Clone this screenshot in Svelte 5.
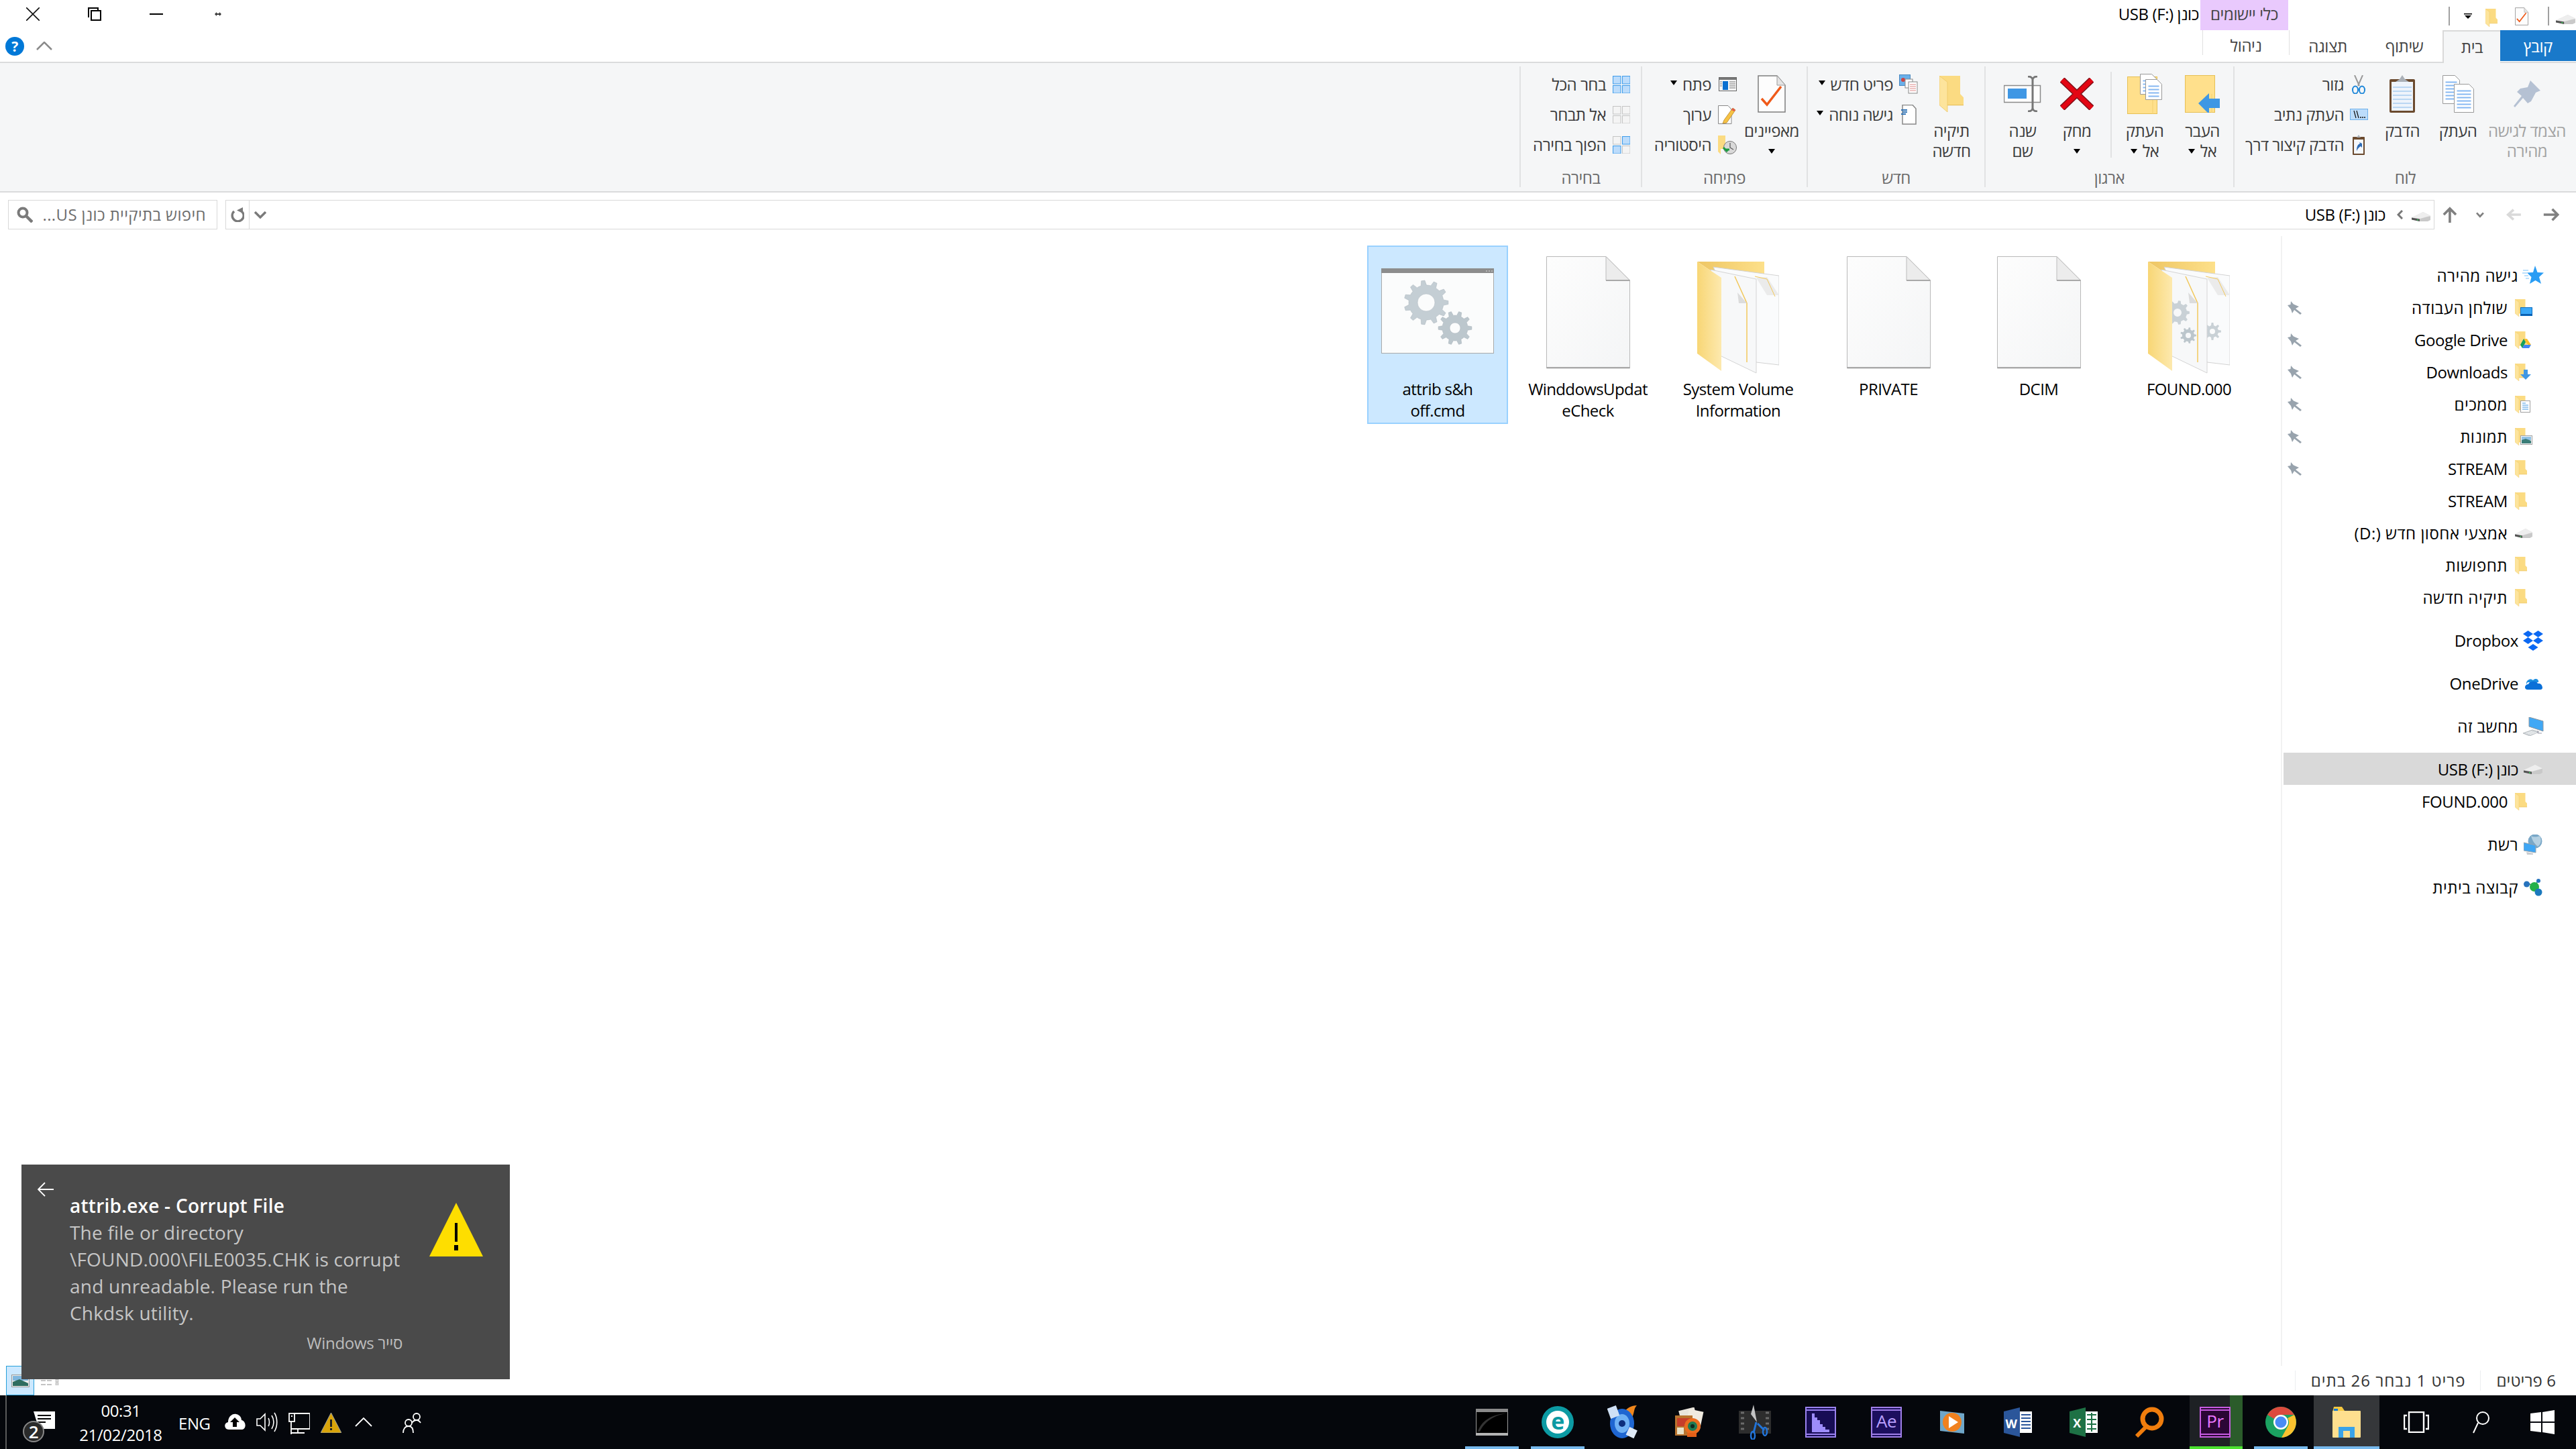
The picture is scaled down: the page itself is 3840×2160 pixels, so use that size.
<script>
  function gear(cx, cy, R, r, hole, n) {
    let d = '';
    const s = (Math.PI * 2) / n;
    for (let i = 0; i < n; i++) {
      const a = i * s;
      const pts = [[r, a - s * 0.5], [r, a - s * 0.28], [R, a - s * 0.14], [R, a + s * 0.14], [r, a + s * 0.28]];
      for (const [q, t] of pts) {
        d += (d ? 'L' : 'M') + (cx + q * Math.cos(t)).toFixed(1) + ' ' + (cy + q * Math.sin(t)).toFixed(1);
      }
    }
    d += 'Z';
    d += `M${cx - hole} ${cy}a${hole} ${hole} 0 1 0 ${hole * 2} 0a${hole} ${hole} 0 1 0 ${-hole * 2} 0Z`;
    return d;
  }

  const quick = [
    { t: 'שולחן העבודה', i: 'desk', pin: true },
    { t: 'Google Drive', i: 'gdrive', pin: true, lat: true },
    { t: 'Downloads', i: 'down', pin: true, lat: true },
    { t: 'מסמכים', i: 'docs', pin: true },
    { t: 'תמונות', i: 'pics', pin: true },
    { t: 'STREAM', i: 'plain', pin: true, lat: true },
    { t: 'STREAM', i: 'plain', lat: true },
    { t: 'אמצעי אחסון חדש (D:\u200E)', i: 'drive' },
    { t: 'תחפושות', i: 'plain' },
    { t: 'תיקיה חדשה', i: 'plain' }
  ];

  const files = [
    { l: ['FOUND.000'], k: 'open', gears: true },
    { l: ['DCIM'], k: 'doc' },
    { l: ['PRIVATE'], k: 'doc' },
    { l: ['System Volume', 'Information'], k: 'open' },
    { l: ['WinddowsUpdat', 'eCheck'], k: 'doc' },
    { l: ['attrib s&h', 'off.cmd'], k: 'cmd', sel: true }
  ];

  const apps = ['explorer', 'chrome', 'pr', 'mag', 'excel', 'word', 'play', 'ae', 'veg', 'sci', 'photo', 'disc', 'eset', 'cmd'];
</script>

{#snippet folder(w, h)}
  <svg width={w} height={h} viewBox="0 0 18 26" preserveAspectRatio="none">
    <path d="M0 0H15.500V13L18 15.500V21H5V21Z" fill="#fbdb82"/>
    <path d="M0 0L6 4.500V26L0 21Z" fill="#fde49c" stroke="#eec766" stroke-width=".4"/>
    <path d="M6 21H18" stroke="#e9c15c" stroke-width=".6"/>
  </svg>
{/snippet}

{#snippet drive(w = 28, h = 14)}
  <svg width={w} height={h} viewBox="0 0 28 14" preserveAspectRatio="none">
    <path d="M0 8.500L17 0L28 5.500L11 14L0 11Z" fill="#d8d8d8"/>
    <path d="M0 8L17 0L28 5.500L12 10Z" fill="#eeeeee"/>
    <path d="M0 8.500V11.500L12 14V10.500Z" fill="#545454"/>
    <path d="M12 10.500V14H24L28 12V6Z" fill="#c9c9c9"/>
    <rect x="8" y="11" width="2" height="1.500" fill="#38d05a"/>
  </svg>
{/snippet}

{#snippet propsDoc(w, h)}
  <svg width={w} height={h} viewBox="0 0 42 56">
    <path d="M1 1H29L41 15V55H1Z" fill="#fdfdfd" stroke="#7d7d7d" stroke-width="1.500"/>
    <path d="M29 1V15H41" fill="#e4e4e4" stroke="#9a9a9a"/>
    <path d="M6 35L14 44L35 17" fill="none" stroke="#ef5a1a" stroke-width="3.500"/>
  </svg>
{/snippet}

{#snippet lined(x, y, w, h)}
  <path d={`M${x} ${y}H${x + w - 7}L${x + w} ${y + 7}V${y + h}H${x}Z`} fill="#fff" stroke="#999" stroke-width="1"/>
  {#each Array.from({ length: Math.floor((h - 10) / 5) }) as _, i}
    <rect x={x + 4} y={y + 9 + i * 5} width={w - 8} height="2" fill="#86b8f2"/>
  {/each}
{/snippet}

{#snippet caret()}<i class="caret"></i>{/snippet}

{#snippet fourSquares(a, b, c, d)}
  <svg width="26" height="26" viewBox="0 0 26 26">
    {#each [[0, 0, a], [14, 0, b], [0, 14, c], [14, 14, d]] as [x, y, on]}
      <rect x={x + .500} y={y + .500} width="11.500" height="11.500" fill={on ? '#bcdcfb' : '#f4f4f4'} stroke={on ? '#3c9bea' : '#c4c4c4'}/>
    {/each}
  </svg>
{/snippet}

{#snippet treeIcon(k)}
  {#if k === 'star'}
    <svg width="32" height="32" viewBox="0 0 32 32">
      <path d="M19 1L22.500 11L32 11.500L25 18L28 28L19.500 23L11 28L13.500 18L7 11.500L16 11Z" fill="#2a9df4"/>
      <path d="M1 8H9M0 12H7M3 16H9M5 20H10" stroke="#a5d6fb" stroke-width="1.500"/>
    </svg>
  {:else if k === 'box'}
    <svg width="32" height="30" viewBox="0 0 32 30" fill="#0b68f2">
      <path d="M8.500 0L16 5L8.500 10L1 5ZM23.500 0L31 5L23.500 10L16 5ZM8.500 10L16 15L8.500 20L1 15ZM23.500 10L31 15L23.500 20L16 15ZM16 20L23.500 25L16 30L8.500 25Z"/>
    </svg>
  {:else if k === 'cloud'}
    <svg width="29" height="18" viewBox="0 0 29 18">
      <path d="M4 10C3 4 10 0 14 4C18 0 23 3 22 7H6Z" fill="#1c8ee0"/>
      <path d="M6 18C0 18 1 10 7 10C9 4 20 5 21 9C27 7 31 18 25 18Z" fill="#0a70d8"/>
    </svg>
  {:else if k === 'pc'}
    <svg width="31" height="28" viewBox="0 0 31 28">
      <path d="M9 0L30 6V21L9 14Z" fill="#40a8f5" stroke="#8a96a0"/>
      <path d="M0 24L14 19L24 22L10 28Z" fill="#cfd4d8" stroke="#a4a9ae" stroke-width=".700"/>
      <path d="M4 24L14 21M7 25L17 22M10 26L20 23" stroke="#f2f4f5"/>
      <path d="M22 20V24H28" stroke="#99a" fill="none"/>
    </svg>
  {:else if k === 'usb'}
    {@render drive()}
  {:else if k === 'net'}
    <svg width="28" height="30" viewBox="0 0 28 30">
      <circle cx="17" cy="10" r="10.500" fill="#79a7c7"/>
      <path d="M11 2C15 5 22 3 24 2C27 8 26 14 21 18C17 14 14 12 11 2Z" fill="#b4d0e2"/>
      <path d="M0 12L18 16V27L0 24Z" fill="#3fa6f4" stroke="#9aa4ab"/>
      <path d="M4 26L14 28V30H5Z" fill="#c8ccd0"/>
    </svg>
  {:else if k === 'home'}
    <svg width="28" height="26" viewBox="0 0 28 26">
      <path d="M6 6L17 13M21 2L17 13M17 13L22 20" stroke="#4b8a7c" stroke-width="1.500"/>
      <circle cx="4.500" cy="8" r="4.500" fill="#2773bd"/>
      <circle cx="22" cy="3" r="3" fill="#2773bd"/>
      <circle cx="16" cy="12" r="7" fill="#24b04a"/>
      <circle cx="22" cy="20" r="5.500" fill="#1b79bd"/>
    </svg>
  {:else if k === 'drive'}
    {@render drive(28, 14)}
  {:else}
    <span class="fwrap">
      {@render folder(18, 26)}
      {#if k === 'desk'}
        <svg class="ov" width="18" height="13" viewBox="0 0 18 13"><rect x=".5" y=".5" width="17" height="12" fill="#39a8f8" stroke="#0a6cc0"/><path d="M0 11H18" stroke="#0a5fb0" stroke-width="2"/></svg>
      {:else if k === 'gdrive'}
        <svg class="ov" width="16" height="14" viewBox="0 0 16 14"><path d="M5 0H10L16 9H11Z" fill="#fbc02d"/><path d="M5 0L8 5L3 14L0 9Z" fill="#16a05d"/><path d="M3 14L5.500 9H16L13 14Z" fill="#4285f4"/></svg>
      {:else if k === 'down'}
        <svg class="ov" width="16" height="16" viewBox="0 0 16 16"><path d="M5 0H11V7H16L8 15L0 7H5Z" fill="#3f97e4"/></svg>
      {:else if k === 'docs'}
        <svg class="ov" width="15" height="18" viewBox="0 0 15 18"><rect x=".5" y=".5" width="14" height="17" fill="#fff" stroke="#a0a0a0"/><path d="M3 4H8M3 7H12M3 10H12M3 13H12" stroke="#3f97e4"/></svg>
      {:else if k === 'pics'}
        <svg class="ov" width="18" height="14" viewBox="0 0 18 14"><rect x=".5" y=".5" width="17" height="13" fill="#f8f8f8" stroke="#a0a0a0"/><rect x="2" y="2" width="14" height="5" fill="#8fc1e6"/><path d="M2 7L8 5L16 8V12H2Z" fill="#3a7d78"/></svg>
      {/if}
    </span>
  {/if}
{/snippet}

{#snippet pinSmall()}
  <svg class="pin" width="21" height="20" viewBox="0 0 21 20">
    <path d="M5 0L9 4.500L17 8L12 11L21 18L19 20L10 13L7 18L5 12L0 6L4.500 5Z" fill="#98a3ad"/>
  </svg>
{/snippet}

{#snippet openFolder(gears)}
  <svg width="122" height="167" viewBox="0 0 122 167">
    <defs>
      <linearGradient id="ofb" x1="0" x2="1"><stop offset="0" stop-color="#eec664"/><stop offset="1" stop-color="#fde08a"/></linearGradient>
      <linearGradient id="off" x1="0" x2="1"><stop offset="0" stop-color="#f8d675"/><stop offset="1" stop-color="#fde9ae"/></linearGradient>
    </defs>
    <path d="M0 0H100V32L36 24Z" fill="url(#ofb)"/>
    <path d="M24 8L122 21V154L88 150Z" fill="#fafbfc" stroke="#d2d2d2"/>
    <path d="M88 24L104 50H122L104 23Z" fill="#ebebeb"/>
    <path d="M86 22L104 26L116 52" fill="none" stroke="#f2c85c" stroke-width="1"/>
    {#if gears}
      <path d={gear(96, 104, 13, 9, 4, 8)} fill="#c9d1d6" fill-rule="evenodd"/>
    {/if}
    <path d="M20 12L88 26V166L34 140Z" fill="#f7f8f9" stroke="#d4d4d4"/>
    <path d="M56 22L74 62V150" fill="none" stroke="#f2c85c" stroke-width="1.500"/>
    <path d="M60 46L74 62L62 62Z" fill="#dcdcdc"/>
    {#if gears}
      <path d={gear(44, 76, 18, 14, 6, 9)} fill="#c9d1d6" fill-rule="evenodd"/>
      <path d={gear(60, 110, 12, 9, 4, 9)} fill="#bcc6cc" fill-rule="evenodd"/>
    {/if}
    <path d="M0 0L36 24V163L0 137Z" fill="url(#off)"/>
  </svg>
{/snippet}

{#snippet appIcon(a)}
  {#if a === 'cmd'}
    <svg width="48" height="40" viewBox="0 0 48 40">
      <rect x=".5" y=".5" width="47" height="39" fill="#000" stroke="#9a9a9a"/><rect width="48" height="5" fill="#8a8a8a"/><rect y="36" width="48" height="4" fill="#b4b4b4"/>
      <path d="M3 34C8 18 24 8 46 7V7C28 9 12 20 6 34Z" fill="#333"/>
    </svg>
  {:else if a === 'eset'}
    <svg width="48" height="48" viewBox="0 0 48 48">
      <circle cx="24" cy="24" r="24" fill="#0c9aa3"/><circle cx="24" cy="24" r="17" fill="#fff"/>
      <text x="24" y="35" text-anchor="middle" class="eset">e</text>
    </svg>
  {:else if a === 'disc'}
    <svg width="48" height="50" viewBox="0 0 48 50">
      <path d="M24 12C28 4 36 0 44 0C38 6 42 12 34 22Z" fill="#f0861c"/>
      <ellipse cx="22" cy="27" rx="18" ry="22" fill="#1f66d1"/>
      <ellipse cx="22" cy="27" rx="11" ry="14" fill="#6fb1f4"/>
      <circle cx="22" cy="27" r="5" fill="#0c2f7c"/>
      <rect x="2" y="2" width="14" height="16" fill="#cfe0f5" transform="rotate(-20 9 10)"/>
      <rect x="30" y="34" width="13" height="13" fill="#dfe9f6" transform="rotate(25 36 40)"/>
    </svg>
  {:else if a === 'photo'}
    <svg width="46" height="44" viewBox="0 0 46 44">
      <rect x="10" y="2" width="24" height="26" fill="#e8e4dc" transform="rotate(-14 22 15)"/>
      <rect x="20" y="4" width="22" height="26" fill="#f0ebe0" transform="rotate(12 30 17)"/>
      <rect x="2" y="12" width="26" height="30" fill="#b8732e"/>
      <rect x="5" y="16" width="20" height="12" fill="#c63d2b"/>
      <rect x="5" y="30" width="10" height="10" fill="#e9e2c8"/>
      <circle cx="28" cy="28" r="12" fill="#ea6d1f"/><circle cx="28" cy="28" r="7" fill="#1f7a52"/><circle cx="28" cy="28" r="3" fill="#0c2a1e"/>
      <rect x="20" y="38" width="14" height="6" fill="#e35f18"/>
    </svg>
  {:else if a === 'sci'}
    <svg width="48" height="52" viewBox="0 0 48 52">
      <rect x="0" y="9" width="48" height="34" fill="#2d2d2d"/>
      <path d="M3 12H8M3 20H8M3 28H8M3 36H8M40 12H45M40 20H45M40 28H45M40 36H45" stroke="#6b6b6b" stroke-width="3"/>
      <path d="M22 0L27 26L18 14Z" fill="#c4c4c4"/>
      <path d="M26 26L22 42M28 28L38 38" stroke="#2274d8" stroke-width="3"/>
      <ellipse cx="21" cy="46" rx="3" ry="6" fill="none" stroke="#2274d8" stroke-width="2.500"/>
      <ellipse cx="39" cy="40" rx="3" ry="6" fill="none" stroke="#2274d8" stroke-width="2.500"/>
    </svg>
  {:else if a === 'veg'}
    <svg width="46" height="46" viewBox="0 0 46 46">
      <rect x="1" y="1" width="44" height="44" fill="#170d55" stroke="#9a82ee" stroke-width="2"/>
      <rect x="1" y="4" width="44" height="2" fill="#9a82ee"/><rect x="1" y="40" width="44" height="2" fill="#9a82ee"/>
      <path d="M10 10H14V16H18V20H22V26H26V30H30V34H36V38H10Z" fill="#9d8cfb"/>
    </svg>
  {:else if a === 'ae'}
    <svg width="46" height="46" viewBox="0 0 46 46">
      <rect x="1" y="1" width="44" height="44" fill="#1c0f5e" stroke="#a07fe8" stroke-width="2"/>
      <rect x="1" y="4" width="44" height="2" fill="#a07fe8"/><rect x="1" y="40" width="44" height="2" fill="#a07fe8"/>
      <text x="23" y="31" text-anchor="middle" class="ae">Ae</text>
    </svg>
  {:else if a === 'pr'}
    <svg width="46" height="46" viewBox="0 0 46 46">
      <rect x="1" y="1" width="44" height="44" fill="#2b0635" stroke="#c75be0" stroke-width="2"/>
      <rect x="1" y="4" width="44" height="2" fill="#c75be0"/><rect x="1" y="40" width="44" height="2" fill="#c75be0"/>
      <text x="23" y="31" text-anchor="middle" class="pr">Pr</text>
    </svg>
  {:else if a === 'play'}
    <svg width="36" height="36" viewBox="0 0 36 36">
      <path d="M0 1L36 5V35L0 31Z" fill="#6fa6c8"/>
      <circle cx="18" cy="18" r="14" fill="#f0811f"/>
      <path d="M13 9L27 18L13 27Z" fill="#fff"/>
    </svg>
  {:else if a === 'word'}
    <svg width="42" height="44" viewBox="0 0 42 44">
      <path d="M24 0V44L0 38V6Z" fill="#2b569a"/>
      <path d="M24 6H42V38H24Z" fill="#fff"/>
      <path d="M26 11H40M26 16H40M26 21H40M26 26H40M26 31H40" stroke="#2b569a" stroke-width="2"/>
      <text x="11" y="31" text-anchor="middle" class="wx">W</text>
    </svg>
  {:else if a === 'excel'}
    <svg width="42" height="44" viewBox="0 0 42 44">
      <path d="M24 0V44L0 38V6Z" fill="#1e7145"/>
      <path d="M24 6H42V38H24Z" fill="#fff"/>
      <path d="M26 11H40M26 18H40M26 25H40M26 32H40M33 8V36" stroke="#1e7145" stroke-width="2"/>
      <text x="11" y="30" text-anchor="middle" class="wx">X</text>
    </svg>
  {:else if a === 'mag'}
    <svg width="44" height="46" viewBox="0 0 44 46">
      <circle cx="26" cy="18" r="14" fill="none" stroke="#f07d0d" stroke-width="7"/>
      <path d="M17 30L3 44" stroke="#f07d0d" stroke-width="6"/>
    </svg>
  {:else if a === 'chrome'}
    <svg width="46" height="46" viewBox="0 0 46 46">
      <circle cx="23" cy="23" r="23" fill="#1ba261"/>
      <path d="M23 0A23 23 0 0 1 43 12H23A11 11 0 0 0 13 18L3 12A23 23 0 0 1 23 0Z" fill="#dc4a3d"/>
      <path d="M43 12A23 23 0 0 1 24 46L34 28A11 11 0 0 0 33 17Z" fill="#fbc22f"/>
      <circle cx="23" cy="23" r="11" fill="#fff"/><circle cx="23" cy="23" r="8.500" fill="#4a8bf5"/>
    </svg>
  {:else if a === 'explorer'}
    <svg width="42" height="46" viewBox="0 0 42 46">
      <path d="M0 8L2 0H14L18 6H34V12H0Z" fill="#f5c73f"/>
      <rect x="2" y="3" width="6" height="5" fill="#0c78d4"/>
      <rect y="6" width="42" height="40" rx="1" fill="#fedf8e"/>
      <path d="M9 30H33V46H26V36H16V46H9Z" fill="#3aa3e8"/>
    </svg>
  {/if}
{/snippet}

<div class="win" dir="rtl">
  <header class="title">
    <span class="qdrive">{@render drive(29, 14)}</span>
    <i class="qsep"></i>
    <span class="qcheck">{@render propsDoc(20, 27)}</span>
    <span class="qfold">{@render folder(18, 27)}</span>
    <svg class="qarrow" width="12" height="8" viewBox="0 0 12 8"><rect width="12" height="1.500"/><path d="M1 3H11L6 8Z"/></svg>
    <i class="qsep qsep2"></i>
    <span class="ctx">כלי יישומים</span>
    <span class="wtitle">כונן USB (F:)</span>
    <div class="wctl">
      <span><svg width="20" height="20" viewBox="0 0 20 20"><path d="M0 0L20 20M20 0L0 20" stroke="#111" stroke-width="1.600"/></svg></span>
      <span><svg width="20" height="20" viewBox="0 0 20 20" fill="none" stroke="#000" stroke-width="2"><path d="M1 15V1H15"/><path d="M1 1H15V4" /><rect x="5" y="5" width="14" height="14"/></svg></span>
      <span><svg width="20" height="2" viewBox="0 0 20 2"><rect width="20" height="2"/></svg></span>
      <span><svg width="10" height="8" viewBox="0 0 10 8" fill="#333"><path d="M0 4L3 1V3H7V1L10 4L7 7V5H3V7Z"/></svg></span>
    </div>
  </header>

  <nav class="tabs">
    <span class="tab file">קובץ</span>
    <span class="tab home">בית</span>
    <span class="tab share">שיתוף</span>
    <span class="tab view">תצוגה</span>
    <span class="tab manage">ניהול</span>
    <div class="helpers">
      <span class="help">?</span>
      <svg width="24" height="13" viewBox="0 0 24 13"><path d="M1 12L12 1L23 12" fill="none" stroke="#8a8a8a" stroke-width="2.500"/></svg>
    </div>
  </nav>

  <section class="ribbon">
    <div class="group g-clip">
      <div class="grow">
        <div class="big w-pin dim">
          <div class="bi"><svg width="40" height="40" viewBox="0 0 40 40"><path d="M25 0L40 15L33 18L26 31L21 34L14 26L2 40L0 38L12 23L5 17L10 12L21 10Z" fill="#b5c1d3"/></svg></div>
          <span>הצמד לגישה</span><span>מהירה</span>
        </div>
        <div class="big w-copy">
          <div class="bi"><svg width="47" height="56" viewBox="0 0 47 56">{@render lined(0.500, 0.500, 25, 42)}{@render lined(17.500, 13.500, 29, 42)}</svg></div>
          <span>העתק</span>
        </div>
        <div class="big w-paste">
          <div class="bi"><svg width="40" height="57" viewBox="0 0 40 57">
            <rect x="1" y="6" width="38" height="50" rx="2" fill="#6b4a2e"/>
            <rect x="4" y="10" width="32" height="43" fill="#eef4fb"/>
            <path d="M6 18H34M6 24H34M6 30H34M6 36H34M6 42H34M6 48H34" stroke="#a9cdf1" stroke-width="1.500"/>
            <path d="M20 0L24 6L30 10H10L16 6Z" fill="#aab0b7"/>
          </svg></div>
          <span>הדבק</span>
        </div>
        <div class="col cut">
          <div class="sm"><span class="si"><svg width="20" height="28" viewBox="0 0 20 28"><path d="M4 0L11 16M16 0L9 16" stroke="#9a9a9a" stroke-width="2"/><ellipse cx="5" cy="22" rx="4" ry="5.500" fill="none" stroke="#1c86d8" stroke-width="2"/><ellipse cx="15" cy="22" rx="4" ry="5.500" fill="none" stroke="#1c86d8" stroke-width="2"/></svg></span><span>גזור</span></div>
          <div class="sm"><span class="si"><svg width="27" height="17" viewBox="0 0 27 17"><rect x=".5" y=".5" width="26" height="16" fill="#bcdcfb" stroke="#6eb0ea"/><path d="M6 3L9 14M10 3L13 14" stroke="#111" stroke-width="1.200"/><path d="M15 13H23" stroke="#111" stroke-width="1.500" stroke-dasharray="2 1"/></svg></span><span>העתק נתיב</span></div>
          <div class="sm"><span class="si"><svg width="20" height="30" viewBox="0 0 20 30"><rect x="1" y="3" width="18" height="27" rx="1" fill="#6b4a2e"/><rect x="3" y="7" width="14" height="21" fill="#f4f7fb"/><path d="M10 0L13 4H7Z" fill="#aab0b7"/><path d="M7 24C7 17 9 14 12 13L11 11L15 13V19L13 17C11 18 9 20 7 24Z" fill="#2f6cb5"/></svg></span><span>הדבק קיצור דרך</span></div>
        </div>
      </div>
      <div class="glabel lclip">לוח</div>
    </div>

    <div class="group g-org">
      <div class="grow">
        <div class="big w-move">
          <div class="bi"><svg width="52" height="56" viewBox="0 0 52 56">
            <rect x=".5" y=".5" width="44" height="55" fill="#ffe08c" stroke="#e6c056"/>
            <path d="M40 28V56" stroke="#f3cf71" stroke-width="1"/>
            <path d="M20 42L36 27V35H52V49H36V58Z" fill="#3f97e4"/>
          </svg></div>
          <span>העבר</span><span class="tail">{@render caret()}אל</span>
        </div>
        <div class="big w-copyto">
          <div class="bi"><svg width="52" height="60" viewBox="0 0 52 60">
            <rect x=".5" y="4.500" width="44" height="55" fill="#ffe08c" stroke="#e6c056"/>
            <path d="M38 36V60" stroke="#f3cf71"/>
            {@render lined(19.500, 0.500, 24, 30)}{@render lined(27.500, 8.500, 24, 30)}
          </svg></div>
          <span>העתק</span><span class="tail">{@render caret()}אל</span>
        </div>
        <i class="isep"></i>
        <div class="big w-del">
          <div class="bi"><svg width="50" height="48" viewBox="0 0 50 48"><path d="M3 3L25 24M47 3L25 24M3 45L25 24M47 45L25 24" stroke="#80131b" stroke-width="10"/><path d="M3 3L47 45M47 3L3 45" stroke="#e30613" stroke-width="7"/></svg></div>
          <span>מחק</span><span class="tail">{@render caret()}</span>
        </div>
        <div class="big w-ren">
          <div class="bi"><svg width="57" height="54" viewBox="0 0 57 54">
            <rect x=".5" y="14.500" width="54" height="25" fill="#fdfdfd" stroke="#8a8a8a" stroke-width="1.500"/>
            <rect x="6" y="19" width="28" height="15" fill="#3f97e4"/>
            <path d="M36 1C40 1 43 3 43 6V48C43 51 40 53 36 53M50 1C46 1 43 3 43 6M43 48C43 51 46 53 50 53" fill="none" stroke="#777" stroke-width="3"/>
          </svg></div>
          <span>שנה</span><span>שם</span>
        </div>
      </div>
      <div class="glabel">ארגון</div>
    </div>

    <div class="group g-new">
      <div class="grow">
        <div class="big w-nf">
          <div class="bi">{@render folder(36, 54)}</div>
          <span>תיקיה</span><span>חדשה</span>
        </div>
        <div class="col newc">
          <div class="sm"><span class="si"><svg width="28" height="29" viewBox="0 0 28 29"><rect x=".5" y=".5" width="16" height="16" fill="#6ab0ea" stroke="#4a88c0"/><circle cx="6" cy="8" r="3" fill="#c44"/><rect x="9" y="7" width="11" height="13" fill="#fff" stroke="#888"/><rect x="14" y="11" width="13" height="17" fill="#fff" stroke="#888"/><path d="M16 15H25M16 18H25M16 21H25M16 24H25" stroke="#d88"/></svg></span><span>פריט חדש</span>{@render caret()}</div>
          <div class="sm"><span class="si"><svg width="24" height="30" viewBox="0 0 24 30"><path d="M3 .5H18L23 6V29H3Z" fill="#fff" stroke="#888" stroke-width="1.500"/><path d="M1 8H10M3 11H10M1 14H8" stroke="#2f73b5" stroke-width="2"/></svg></span><span>גישה נוחה</span>{@render caret()}</div>
        </div>
      </div>
      <div class="glabel">חדש</div>
    </div>

    <div class="group g-open">
      <div class="grow">
        <div class="big w-prop">
          <div class="bi">{@render propsDoc(42, 56)}</div>
          <span>מאפיינים</span><span class="tail">{@render caret()}</span>
        </div>
        <div class="col openc">
          <div class="sm"><span class="si"><svg width="27" height="21" viewBox="0 0 27 21"><rect x=".5" y=".5" width="26" height="20" fill="#f5f5f5" stroke="#666"/><rect x="1" y="1" width="25" height="3" fill="#777"/><rect x="6" y="6" width="8" height="13" fill="#0a6fd0"/><path d="M16 7H25M16 10H25M16 13H25M16 16H25M2 7H5M2 10H5M2 13H5" stroke="#777"/></svg></span><span>פתח</span>{@render caret()}</div>
          <div class="sm"><span class="si"><svg width="28" height="28" viewBox="0 0 28 28"><path d="M.5 .5H15L20 6V27.500H.5Z" fill="#fff" stroke="#888"/><path d="M22 4L26 7L13 26L7 27L9 22Z" fill="#f6c244" stroke="#b8862a" stroke-width=".800"/><path d="M22 4L26 7L24 9L20 7Z" fill="#e25b4a"/></svg></span><span>ערוך</span></div>
          <div class="sm"><span class="si"><svg width="28" height="28" viewBox="0 0 28 28"><path d="M0 0H11V20H4V28L0 24Z" fill="#fbdb82"/><circle cx="18" cy="18" r="9.500" fill="#d9d9d9" stroke="#777"/><path d="M18 11V18L23 21" stroke="#555" fill="none" stroke-width="1.200"/><path d="M8 18L14 24M10 21H17" stroke="#1c9a40" stroke-width="3"/></svg></span><span>היסטוריה</span></div>
        </div>
      </div>
      <div class="glabel">פתיחה</div>
    </div>

    <div class="group g-sel">
      <div class="grow">
        <div class="col selc">
          <div class="sm"><span class="si">{@render fourSquares(true, true, true, true)}</span><span>בחר הכל</span></div>
          <div class="sm"><span class="si">{@render fourSquares(false, false, false, false)}</span><span>אל תבחר</span></div>
          <div class="sm"><span class="si">{@render fourSquares(false, true, true, false)}</span><span>הפוך בחירה</span></div>
        </div>
      </div>
      <div class="glabel">בחירה</div>
    </div>
  </section>

  <div class="addr">
    <div class="navs">
      <svg width="28" height="24" viewBox="0 0 28 24" fill="none" stroke="#808080" stroke-width="4"><path d="M2 12H25M16 3L25 12L16 21"/></svg>
      <svg width="24" height="20" viewBox="0 0 24 20" fill="none" stroke="#d9d9d9" stroke-width="4"><path d="M24 10H3M12 2L3 10L12 18"/></svg>
      <svg width="13" height="9" viewBox="0 0 13 9" fill="none" stroke="#808080" stroke-width="3"><path d="M1 1L6.500 7L12 1"/></svg>
      <svg width="24" height="25" viewBox="0 0 24 25" fill="none" stroke="#808080" stroke-width="4"><path d="M12 25V3M2 12L12 2L22 12"/></svg>
    </div>
    <div class="addrbox">
      <span class="adrive">{@render drive(28, 14)}</span>
      <svg class="bc" width="9" height="14" viewBox="0 0 9 14" fill="none" stroke="#777" stroke-width="3"><path d="M8 1L2 7L8 13"/></svg>
      <span class="path">כונן USB (F:)</span>
      <div class="atools">
        <span class="refresh"><svg width="20" height="22" viewBox="0 0 20 22" fill="none" stroke="#7a7a7a" stroke-width="3.400"><path d="M5 6A8.500 8.500 0 1 0 14 4.500"/><path d="M9 4.500L18 0V9Z" stroke="none" fill="#7a7a7a"/></svg></span>
        <svg width="18" height="11" viewBox="0 0 18 11" fill="none" stroke="#7a7a7a" stroke-width="3.400"><path d="M1 1L9 9L17 1"/></svg>
      </div>
    </div>
    <div class="search">
      <span class="sph">חיפוש בתיקיית כונן US...</span>
      <svg width="24" height="24" viewBox="0 0 24 24" fill="none" stroke="#7a7a7a"><circle cx="9" cy="9" r="6.500" stroke-width="4"/><path d="M14 14L23 23" stroke-width="4.500"/></svg>
    </div>
  </div>

  <main class="main">
    <aside class="tree">
      <div class="row l1">{@render treeIcon('star')}<span>גישה מהירה</span></div>
      {#each quick as q}
        <div class="row l2">
          <span class="ic">{@render treeIcon(q.i)}</span><span class:lat={q.lat}>{q.t}</span>
          {#if q.pin}{@render pinSmall()}{/if}
        </div>
      {/each}
      <div class="row l1 gap">{@render treeIcon('box')}<span class="lat">Dropbox</span></div>
      <div class="row l1 gap"><span class="ic1">{@render treeIcon('cloud')}</span><span class="lat">OneDrive</span></div>
      <div class="row l1 gap"><span class="ic1">{@render treeIcon('pc')}</span><span>מחשב זה</span></div>
      <div class="row l1 gap selrow"><span class="ic1">{@render treeIcon('usb')}</span><span class="lat">כונן USB (F:)</span></div>
      <div class="row l2"><span class="ic">{@render treeIcon('plain')}</span><span class="lat">FOUND.000</span></div>
      <div class="row l1 gap"><span class="ic1">{@render treeIcon('net')}</span><span>רשת</span></div>
      <div class="row l1 gap"><span class="ic1">{@render treeIcon('home')}</span><span>קבוצה ביתית</span></div>
    </aside>

    <div class="grid">
      {#each files as f}
        <div class="cell" class:sel={f.sel}>
          <div class="thumb">
            {#if f.k === 'doc'}
              <svg width="125" height="168" viewBox="0 0 125 168">
                <defs><linearGradient id="dg" x1="0" y1="0" x2="1" y2="1"><stop offset="0" stop-color="#fdfdfd"/><stop offset="1" stop-color="#f4f5f6"/></linearGradient></defs>
                <path d="M.5 .5H89L124.500 36V167H.5Z" fill="url(#dg)" stroke="#b9b9b9"/>
                <path d="M.5 166H124.500" stroke="#a8a8a8" stroke-width="2"/>
                <path d="M89 .5V36H124.500Z" fill="#ececec" stroke="#bcbcbc"/>
                <path d="M89 36H124.500" stroke="#a8a8a8" stroke-width="2"/>
              </svg>
            {:else if f.k === 'open'}
              <span class="ofw">{@render openFolder(f.gears)}</span>
            {:else}
              <svg class="cmdi" width="168" height="127" viewBox="0 0 168 127">
                <rect x=".5" y=".5" width="167" height="126" fill="#fbfcfc" stroke="#a9a9a9"/>
                <rect width="168" height="7" fill="#8d8d8d"/>
                <path d="M156 4H158M160 4H162M164 4H166" stroke="#ddd"/>
                <path d={gear(67, 51, 33, 26, 13, 11)} fill="#c4ced4" stroke="#a8b3ba" stroke-width=".500" fill-rule="evenodd"/>
                <path d={gear(110, 89, 25, 19, 8, 10)} fill="#bcc7cd" stroke="#a8b3ba" stroke-width=".500" fill-rule="evenodd"/>
              </svg>
            {/if}
          </div>
          <div class="fname">{#each f.l as line}<span>{line}</span>{/each}</div>
        </div>
      {/each}
    </div>
  </main>

  <footer class="status">
    <span class="st1">6 פריטים</span>
    <i class="stsep"></i>
    <span class="st2">פריט 1 נבחר 26 בתים</span>
    <i class="stsep"></i>
    <div class="views">
      <span class="vbtn"><svg width="27" height="19" viewBox="0 0 27 19"><rect x=".5" y=".5" width="26" height="18" fill="#eee" stroke="#999"/><rect x="2" y="2" width="23" height="7" fill="#7fb6de"/><path d="M2 11L12 7L25 13V17H2Z" fill="#2f6d60"/></svg></span>
      <svg width="27" height="14" viewBox="0 0 27 14"><path d="M0 1H18M0 7H18M0 13H18" stroke="#888" stroke-width="1.200" stroke-dasharray="7 2"/><rect x="22" y="0" width="4" height="4" fill="#d44"/><rect x="22" y="5" width="4" height="4" fill="#ddd" stroke="#999" stroke-width=".5"/><rect x="22" y="10" width="4" height="4" fill="#ddd" stroke="#999" stroke-width=".5"/></svg>
    </div>
  </footer>

  <div class="taskbar">
    <div class="tbright">
      <span class="tb start"><svg width="36" height="36" viewBox="0 0 36 36" fill="#fff"><path d="M0 5L16 3V17H0ZM18 3L36 0V17H18ZM0 19H16V33L0 31ZM18 19H36V36L18 33Z"/></svg></span>
      <span class="tb searchb"><svg width="26" height="34" viewBox="0 0 26 34" fill="none" stroke="#fff" stroke-width="2"><circle cx="16" cy="11" r="9"/><path d="M9 18L2 33"/></svg></span>
      <span class="tb taskv"><svg width="38" height="32" viewBox="0 0 38 32" fill="none" stroke="#fff" stroke-width="2.400"><rect x="8" y="1" width="22" height="30"/><path d="M5 6H1V26H5M33 6H37V26H33"/></svg></span>
      {#each apps as a}
        <span class="tb {a}" class:on={['cmd', 'eset', 'chrome', 'explorer', 'pr'].includes(a)}>{@render appIcon(a)}</span>
      {/each}
    </div>
    <div class="tray">
      <i class="tline"></i>
      <span class="action">
        <svg width="32" height="26" viewBox="0 0 32 26"><path d="M0 0H32V26H8Z" fill="#fff"/><path d="M6 6H26M6 11H26M6 16H18" stroke="#000" stroke-width="2"/></svg>
        <b class="badge">2</b>
      </span>
      <span class="clock"><span>00:31</span><span>21/02/2018</span></span>
      <span class="lang">ENG</span>
      <svg class="t1" width="32" height="26" viewBox="0 0 32 26"><path d="M7 25C0 25 -1 15 6 14C6 6 12 1 18 2C24 3 26 8 26 11C33 12 34 25 26 25Z" fill="#fff"/><path d="M16 7L23 14H19V21H13V14H9Z" fill="#000"/></svg>
      <svg class="t2" width="32" height="32" viewBox="0 0 32 32" fill="none" stroke="#fff" stroke-width="1.600"><path d="M1 11H6L13 4V28L6 21H1Z"/><path d="M18 10C20 13 20 19 18 22M23 6C27 12 27 20 23 26M27 2C32 10 32 22 27 30"/></svg>
      <svg class="t3" width="32" height="32" viewBox="0 0 32 32" fill="none" stroke="#fff" stroke-width="1.800"><path d="M8 1H32V24H4"/><rect x="1" y="1" width="8" height="12"/><path d="M4 13V32M4 30H24M14 24V30"/><path d="M4 5H6" stroke-width="2"/></svg>
      <svg class="t4" width="31" height="30" viewBox="0 0 31 30"><path d="M15.500 0L31 30H0Z" fill="#d9a40a" stroke="#9aa0a0"/><rect x="14" y="10" width="3" height="11" fill="#222"/><rect x="14" y="23" width="3" height="3" fill="#222"/></svg>
      <svg class="t5" width="26" height="14" viewBox="0 0 26 14" fill="none" stroke="#fff" stroke-width="1.800"><path d="M1 13L13 1L25 13"/></svg>
      <svg class="t6" width="28" height="30" viewBox="0 0 28 30" fill="none" stroke="#fff" stroke-width="1.800"><circle cx="21" cy="6" r="5"/><circle cx="9" cy="15" r="5"/><path d="M1 30C1 24 4 20 9 20C14 20 16 24 16 30M14 15C16 12 19 11 21 11C23 11 25 12 27 15"/></svg>
    </div>
  </div>

  <aside class="toast" dir="ltr">
    <svg class="tback" width="24" height="22" viewBox="0 0 24 22" fill="none" stroke="#fff" stroke-width="1.800"><path d="M24 11H2M11 1L1 11L11 21"/></svg>
    <div class="tbody">
      <div class="ttitle">attrib.exe - Corrupt File</div>
      <div class="tmsg">
        <span>The file or directory</span>
        <span>\FOUND.000\FILE0035.CHK is corrupt</span>
        <span>and unreadable. Please run the</span>
        <span>Chkdsk utility.</span>
      </div>
      <div class="tsrc" dir="rtl">סייר Windows</div>
    </div>
    <svg class="twarn" width="80" height="80" viewBox="0 0 80 80"><path d="M40 0L80 80H0Z" fill="#fede00"/><rect x="38" y="30" width="4" height="28" fill="#000"/><rect x="37" y="63" width="6" height="8" fill="#000"/></svg>
  </aside>
</div>

<style>
  :global(body) { margin: 0; background: #fff; }
  .win {
    position: relative; width: 3840px; height: 2160px; overflow: hidden;
    display: flex; flex-direction: column; background: #fff; color: #000;
    font-family: "Open Sans", "Noto Sans", "Liberation Sans", sans-serif;
    font-size: 24px; line-height: 32px; letter-spacing: -0.4px;
  }
  span, div { white-space: nowrap; }

  /* title bar */
  .title { height: 45px; display: flex; align-items: flex-start; flex: none; }
  .title svg { display: block; }
  .qdrive { margin: 22px 1px 0 0; }
  .qsep { width: 2px; height: 28px; margin: 10px 10px 0 0; background: #a0a0a0; }
  .qcheck { margin: 11px 29px 0 0; }
  .qfold { margin: 13px 26px 0 0; }
  .qarrow { margin: 20px 20px 0 0; }
  .qsep2 { margin-right: 21px; }
  .ctx { width: 131px; height: 45px; margin-right: 239px; background: #e9c9fd; color: #444; text-align: center; line-height: 42px; }
  .wtitle { line-height: 42px; margin-right: 2px; }
  .wctl { margin-right: auto; display: flex; direction: ltr; padding-left: 3px; height: 42px; }
  .wctl span { width: 92px; display: flex; align-items: center; justify-content: center; }

  /* tabs */
  .tabs { height: 49px; flex: none; display: flex; border-bottom: 2px solid #dadbdc; box-sizing: border-box; position: relative; }
  .tab { text-align: center; line-height: 48px; color: #444; box-sizing: border-box; height: 47px; }
  .file { width: 113px; background: #1979ca; color: #fff; height: 46px; }
  .home { width: 86px; background: #f5f6f7; border-top: 2px solid #d9d9d9; border-left: 2px solid #d9d9d9; height: 49px; line-height: 46px; position: relative; }
  .share { width: 114px; }
  .view { width: 114px; }
  .manage { width: 130px; border-left: 1px solid #e0e0e0; border-right: 1px solid #e0e0e0; height: 37px; line-height: 46px; overflow: visible; }
  .helpers { margin-right: auto; display: flex; direction: ltr; align-items: center; height: 47px; padding-left: 8px; gap: 18px; }
  .help { width: 28px; height: 28px; border-radius: 50%; background: #0078d7; color: #fff; text-align: center; font-weight: 700; font-size: 21px; line-height: 28px; }

  /* ribbon */
  .ribbon { height: 193px; flex: none; background: #f5f6f7; border-bottom: 2px solid #dadbdc; box-sizing: border-box; display: flex; padding-top: 5px; }
  .group { height: 180px; display: flex; flex-direction: column; border-left: 2px solid #e1e2e3; box-sizing: border-box; letter-spacing: -0.5px; }
  .g-clip { width: 511px; padding-right: 18px; box-sizing: border-box; }
  .g-org { width: 371px; }
  .g-new { width: 265px; }
  .g-open { width: 247px; }
  .g-sel { width: 181px; }
  .grow { flex: 1; display: flex; color: #3b3b3b; }
  .glabel { height: 24px; line-height: 24px; text-align: center; color: #6a6a6a; margin-bottom: 2px; }
  .lclip { margin-right: -18px; }
  .big { display: flex; flex-direction: column; align-items: center; flex: none; line-height: 30px; }
  .big > span { display: flex; align-items: center; gap: 8px; height: 30px; position: relative; top: -1px; }
  .bi { height: 82px; display: flex; align-items: center; justify-content: center; }
  .bi svg { display: block; }
  .dim { color: #a2a2a2; }
  .w-pin { width: 110px; } .w-copy { width: 96px; } .w-paste { width: 70px; }
  .w-move { width: 92px; } .w-copyto { width: 80px; } .w-del { width: 100px; } .w-ren { width: 62px; }
  .w-nf { width: 98px; } .w-prop { width: 104px; }
  .isep { width: 2px; height: 128px; margin: 8px 9px 0 0; background: #e1e2e3; flex: none; }
  .tail { flex-direction: row-reverse; justify-content: center; }
  .caret { display: inline-block; width: 0; height: 0; border-top: 7px solid #000; border-left: 5px solid transparent; border-right: 5px solid transparent; }
  .col { display: flex; flex-direction: column; padding-top: 4px; }
  .sm { height: 45px; display: flex; align-items: center; }
  .sm .caret { margin-right: 8px; margin-top: -4px; }
  .si { display: flex; align-items: center; justify-content: center; flex: none; }
  .si svg { display: block; }
  .cut { margin-right: 12px; }
  .cut .si { width: 36px; margin-left: 4px; }
  .newc .si { width: 30px; margin-left: 8px; }
  .openc .si { width: 28px; margin-left: 10px; }
  .selc { margin-right: 16px; }
  .selc .si { width: 26px; margin-left: 10px; }

  /* address */
  .addr { height: 65px; flex: none; display: flex; padding: 11px 0 10px 12px; box-sizing: border-box; gap: 12px; }
  .navs { width: 199px; display: flex; align-items: center; height: 44px; flex: none; }
  .navs svg:nth-child(1) { margin-right: 25px; }
  .navs svg:nth-child(2) { margin-right: 32px; }
  .navs svg:nth-child(3) { margin-right: 33px; }
  .navs svg:nth-child(4) { margin-right: 28px; }
  .addrbox { flex: 1; height: 44px; border: 1px solid #d9d9d9; box-sizing: border-box; display: flex; align-items: center; }
  .adrive { margin: 6px 5px 0 0; display: flex; }
  .bc { margin-right: 13px; }
  .path { margin-right: 17px; }
  .atools { margin-right: auto; display: flex; direction: ltr; align-items: center; height: 100%; }
  .refresh { width: 34px; height: 100%; border-right: 1px solid #d9d9d9; display: flex; align-items: center; justify-content: center; margin-right: 7px; }
  .search { width: 312px; height: 44px; border: 1px solid #d9d9d9; box-sizing: border-box; display: flex; align-items: center; justify-content: space-between; padding: 0 16px 0 12px; color: #6d6d6d; letter-spacing: 0.35px; }

  /* main */
  .main { flex: 1; display: flex; min-height: 0; }
  .tree { width: 440px; box-sizing: border-box; padding-top: 34px; border-left: 2px solid #f2f2f2; flex: none; padding-right: 0; padding-left: 2px; letter-spacing: 0.5px; }
  .lat { letter-spacing: -0.4px; }
  .row { height: 48px; display: flex; align-items: center; box-sizing: border-box; padding-top: 2px; }
  .row svg { display: block; }
  .l1 { padding-right: 48px; gap: 6px; }
  .ic1 { width: 32px; display: flex; justify-content: center; }
  .l2 { padding-right: 65px; gap: 11px; }
  .ic { width: 26px; display: flex; justify-content: flex-start; direction: ltr; }
  .fwrap { position: relative; display: block; width: 26px; height: 26px; }
  .ov { position: absolute; left: 8px; bottom: 1px; }
  .pin { margin-right: auto; margin-left: 6px; }
  .gap { margin-top: 16px; }
  .selrow { background: #d9d9d9; }
  .grid { flex: 1; display: flex; padding: 14px 32px 0 0; gap: 14px; align-items: flex-start; }
  .cell { width: 210px; height: 266px; box-sizing: border-box; border: 2px solid transparent; display: flex; flex-direction: column; align-items: center; }
  .cell.sel { background: #cce8ff; border-color: #99d1ff; }
  .thumb { height: 196px; flex: none; display: flex; justify-content: center; align-items: flex-end; box-sizing: border-box; }
  .thumb > svg { display: block; margin-bottom: 14px; }
  .ofw { display: block; margin-bottom: 7px; }
  .ofw :global(svg) { display: block; }
  .thumb .cmdi { margin-bottom: 37px; }
  .fname { display: flex; flex-direction: column; align-items: center; letter-spacing: -0.6px; }

  /* status */
  .status { height: 44px; flex: none; display: flex; align-items: center; color: #333; letter-spacing: 1px; }
  .st1 { margin: 0 30px 0 23px; letter-spacing: 0.1px; }
  .stsep { width: 1px; height: 30px; background: #eceef0; }
  .st2 { margin: 0 22px 0 23px; }
  .views { margin-right: auto; display: flex; direction: ltr; align-items: center; padding-left: 9px; height: 44px; }
  .vbtn { width: 42px; height: 44px; background: #cce8ff; border: 1px solid #26a0da; box-sizing: border-box; display: flex; align-items: center; justify-content: center; margin-right: 10px; }
  .views svg { display: block; }

  /* taskbar */
  .taskbar { height: 80px; flex: none; background: #05070c; display: flex; justify-content: space-between; color: #fff; }
  .tbright { display: flex; height: 80px; }
  .tb { width: 98px; height: 80px; display: flex; align-items: center; justify-content: center; position: relative; flex: none; }
  .tb svg { display: block; position: relative; }
  .tb.on::after { content: ""; position: absolute; left: 9px; right: 9px; bottom: 0; height: 4px; background: #76b9ed; }
  .tb.start { width: 100px; }
  .tb.searchb { width: 84px; }
  .tb.taskv { width: 109px; }
  .tb.explorer { background: #35373a; }
  .tb.explorer::after { left: 0; right: 0; }
  .tb.pr::before { content: ""; position: absolute; left: 11px; right: 8px; top: 0; bottom: 0; background: linear-gradient(90deg, #1e2124 0 76%, #2b5c2b 76% 100%); }
  .tb.pr::after { left: 11px; right: 8px; background: #4be22f; }
  .tray { direction: ltr; display: flex; align-items: center; height: 80px; position: relative; }
  .tray svg { display: block; position: absolute; }
  .tline { position: absolute; left: 8px; top: 0; width: 2px; height: 80px; background: #5a5a5a; }
  .action { position: absolute; left: 50px; top: 24px; }
  .action svg { position: static; }
  .badge { position: absolute; left: -16px; top: 14px; width: 32px; height: 32px; box-sizing: border-box; border-radius: 50%; border: 2px solid #888; background: #2a2a2a; color: #fff; text-align: center; font-size: 26px; line-height: 28px; font-weight: 600; }
  .clock { position: absolute; left: 100px; width: 160px; top: 5px; display: flex; flex-direction: column; align-items: center; line-height: 36px; }
  .lang { position: absolute; left: 266px; top: 26px; }
  .t1 { left: 334px; top: 26px; } .t2 { left: 382px; top: 24px; } .t3 { left: 430px; top: 26px; }
  .t4 { left: 478px; top: 26px; } .t5 { left: 529px; top: 33px; } .t6 { left: 600px; top: 26px; }

  /* toast */
  .toast { position: absolute; left: 32px; bottom: 104px; width: 728px; height: 320px; background: #4a4a4a; color: #fff; box-sizing: border-box; display: flex; padding: 41px 0 0 72px; letter-spacing: 0.2px; }
  .tback { position: absolute; left: 24px; top: 26px; }
  .tbody { width: 536px; }
  .ttitle { font-size: 28px; font-weight: 600; line-height: 40px; letter-spacing: 0.25px; }
  .tmsg { font-size: 28px; line-height: 40px; color: #c6c6c6; display: flex; flex-direction: column; margin-top: 0; }
  .tsrc { color: #bdbdbd; margin-top: 9px; text-align: right; padding-right: 40px; letter-spacing: -0.3px; }
  .twarn { position: absolute; left: 608px; top: 57px; }

  .eset { font: 700 34px "Open Sans", sans-serif; fill: #0c9aa3; }
  .ae { font: 400 26px "Open Sans", sans-serif; fill: #b9a0ff; }
  .pr { font: 400 26px "Open Sans", sans-serif; fill: #ea77ff; }
  .wx { font: 700 18px "Open Sans", sans-serif; fill: #fff; }
</style>
